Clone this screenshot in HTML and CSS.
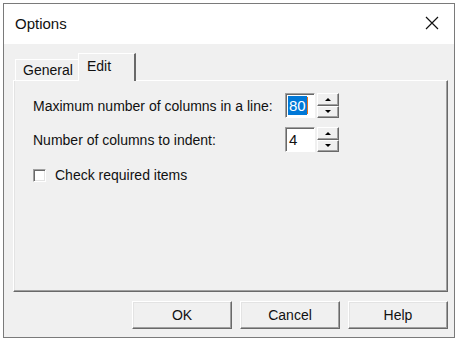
FILE: index.html
```html
<!DOCTYPE html>
<html lang="en">
<head>
    <meta charset="UTF-8">
    <title>Options</title>
    <link rel="stylesheet" href="styles.css">
</head>
<body>
    <div class="window">
        <div class="titlebar">
            <span class="title">Options</span>
            <svg class="close" width="14" height="14" viewBox="0 0 14 14">
                <path d="M1 1 L13 13 M13 1 L1 13" stroke="#111" stroke-width="1.2" fill="none"/>
            </svg>
        </div>
        <div class="content">
            <div class="tabs">
                <div class="tab">General</div>
                <div class="tab active">Edit</div>
            </div>
            <div class="panel">
                <div class="row">
                    <label class="label">Maximum number of columns in a line:</label>
                    <div class="spinner">
                        <div class="spin-input"><span class="selected">80</span><span class="caret"></span></div>
                        <div class="spin-buttons">
                            <div class="spin-btn"><span class="arrow up"></span></div>
                            <div class="spin-btn"><span class="arrow down"></span></div>
                        </div>
                    </div>
                </div>
                <div class="row">
                    <label class="label">Number of columns to indent:</label>
                    <div class="spinner">
                        <div class="spin-input"><span class="value">4</span></div>
                        <div class="spin-buttons">
                            <div class="spin-btn"><span class="arrow up"></span></div>
                            <div class="spin-btn"><span class="arrow down"></span></div>
                        </div>
                    </div>
                </div>
                <div class="check-row">
                    <span class="checkbox"></span>
                    <label>Check required items</label>
                </div>
            </div>
            <div class="buttons">
                <button class="btn">OK</button>
                <button class="btn">Cancel</button>
                <button class="btn">Help</button>
            </div>
        </div>
    </div>
</body>
</html>
```

FILE: styles.css
```css
body {
    margin: 0;
    background: #ffffff;
    font-family: 'Liberation Sans', Arial, sans-serif;
    font-size: 14px;
    color: #111;
}
.window {
    margin: 3px 0 0 3px;
    width: 450px;
    border: 1px solid #7a7a7a;
    background: #f0f0f0;
}
.titlebar {
    height: 40px;
    background: #fff;
    display: flex;
    align-items: center;
    justify-content: space-between;
    padding: 0 15px 0 11px;
}
.title { font-size: 15px; margin-top: -2px; }
.close { margin-top: -2px; }

.content { padding: 9px 6px 8px 9px; }

.tabs {
    display: flex;
    align-items: flex-end;
    height: 27px;
    padding-left: 2px;
}
.tab {
    height: 21px;
    width: 64px;
    border: 1px solid;
    border-color: #fff #a0a0a0 transparent #fff;
    border-bottom: none;
    box-sizing: border-box;
    padding: 2px 0 0 7px;
}
.tab.active {
    height: 28px;
    width: 58px;
    margin-bottom: -1px;
    margin-left: -1px;
    position: relative;
    background: #f0f0f0;
    border-right: 2px solid #696969;
    padding: 4px 0 0 8px;
}

.panel {
    height: 212px;
    box-sizing: border-box;
    border: 1px solid;
    border-color: #fff #696969 #696969 #fff;
    box-shadow: inset -1px -1px #a0a0a0, inset 1px 0 #e3e3e3;
    padding: 12px 0 0 19px;
}
.row {
    display: flex;
    align-items: center;
    height: 25px;
    margin-bottom: 9px;
}
.label { width: 252px; }
.spinner { display: flex; gap: 2px; }
.spin-input {
    width: 30px;
    height: 25px;
    box-sizing: border-box;
    background: #fff;
    border: 1px solid;
    border-color: #a0a0a0 #fff #fff #a0a0a0;
    box-shadow: inset 1px 1px #696969;
    display: flex;
    align-items: center;
    padding-left: 2px;
    font-size: 15px;
}
.selected {
    background: #0078d7;
    color: #fff;
    padding: 1px 1px;
    line-height: 17px;
}
.caret {
    width: 1px;
    height: 17px;
    background: #e07020;
}
.value { padding-left: 1px; }
.spin-buttons {
    display: flex;
    flex-direction: column;
    width: 22px;
    height: 25px;
}
.spin-btn {
    flex: 1;
    border: 1px solid;
    border-color: #fff #696969 #696969 #fff;
    box-shadow: inset -1px -1px #a0a0a0;
    display: flex;
    align-items: center;
    justify-content: center;
}
.arrow {
    width: 0;
    height: 0;
    border-left: 3px solid transparent;
    border-right: 3px solid transparent;
}
.arrow.up { border-bottom: 3px solid #000; }
.arrow.down { border-top: 3px solid #000; }

.check-row {
    display: flex;
    align-items: center;
    gap: 9px;
    margin-top: 15px;
}
.checkbox {
    width: 13px;
    height: 13px;
    box-sizing: border-box;
    background: #fff;
    border: 1px solid;
    border-color: #a0a0a0 #fff #fff #a0a0a0;
    box-shadow: inset 1px 1px #696969, inset -1px -1px #e3e3e3;
}

.buttons {
    display: flex;
    justify-content: flex-end;
    gap: 8px;
    margin-top: 9px;
}
.btn {
    width: 100px;
    height: 28px;
    font-family: inherit;
    font-size: 14px;
    color: #111;
    background: #f0f0f0;
    border: 1px solid;
    border-color: #fff #696969 #696969 #fff;
    box-shadow: inset -1px -1px #a0a0a0, inset 1px 1px #e3e3e3;
    padding: 0;
}
```
